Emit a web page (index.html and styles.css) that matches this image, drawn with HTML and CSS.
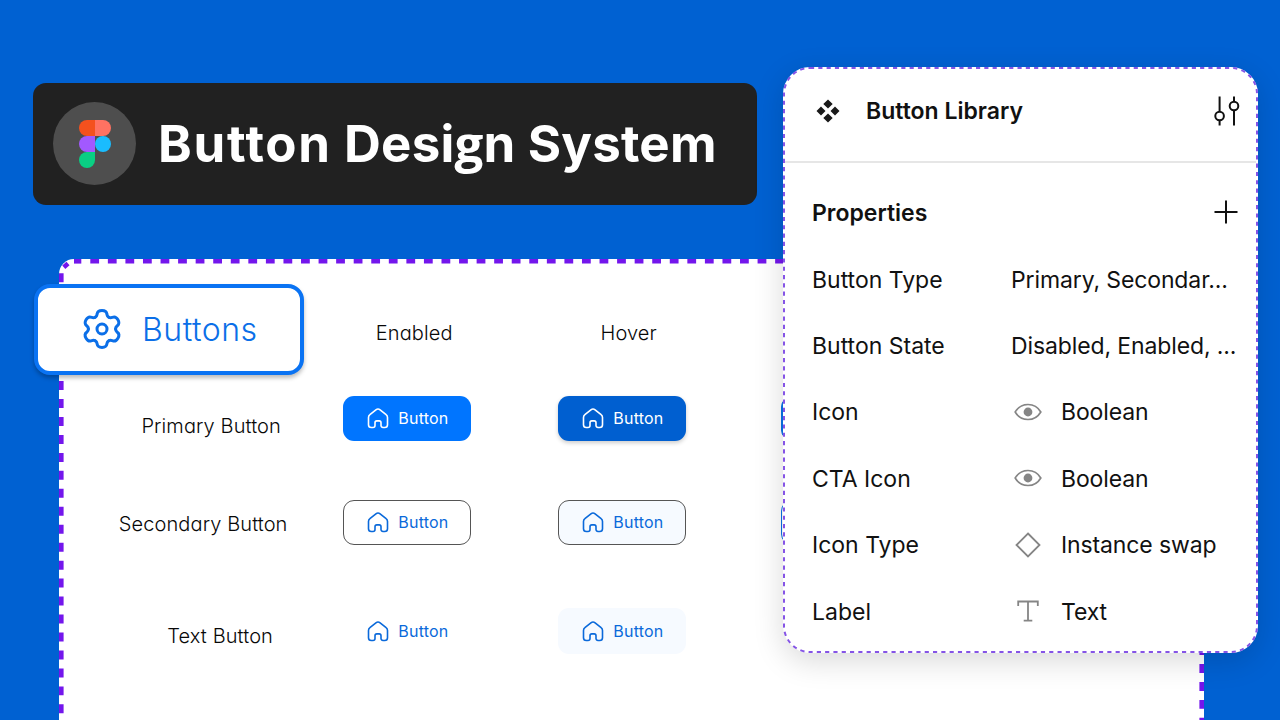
FILE: index.html
```html
<!DOCTYPE html>
<html lang="en">
<head>
<meta charset="utf-8">
<title>Button Design System</title>
<link rel="stylesheet" href="styles.css">
</head>
<body>
<svg class="defs" width="0" height="0" aria-hidden="true">
  <symbol id="home" viewBox="0 0 22 22"><path d="M4.3 20.5H6a2 2 0 0 0 2-2v-2.8a1.8 1.8 0 0 1 1.8-1.8h2.4a1.8 1.8 0 0 1 1.8 1.8v2.8a2 2 0 0 0 2 2h1.7a2.8 2.8 0 0 0 2.8-2.8v-7.3a3.5 3.5 0 0 0-1.4-2.8l-6-4.8a3.4 3.4 0 0 0-4.2 0l-6 4.8a3.5 3.5 0 0 0-1.4 2.8v7.3a2.8 2.8 0 0 0 2.8 2.8z" fill="none" stroke="currentColor" stroke-width="1.6"/></symbol>
  <symbol id="eye" viewBox="0 0 28 18"><path d="M1.2 9C4 4.2 8.5 1.5 14 1.5S24 4.2 26.8 9C24 13.8 19.5 16.5 14 16.5S4 13.8 1.2 9z" fill="none" stroke="currentColor" stroke-width="1.7"/><circle cx="14" cy="9" r="4.4" fill="currentColor"/></symbol>
</svg>
<header class="title">
  <span class="title-logo">
    <svg width="32" height="48" viewBox="0 0 32 48"><path d="M8 0h8v16H8A8 8 0 0 1 8 0z" fill="#f4511e"/><path d="M16 0h8a8 8 0 0 1 0 16h-8z" fill="#ff7262"/><path d="M8 16h8v16H8a8 8 0 0 1 0-16z" fill="#a259ff"/><circle cx="24" cy="24" r="8" fill="#1abcfe"/><path d="M8 32h8v8a8 8 0 1 1-8-8z" fill="#0acf83"/></svg>
  </span>
  <h1><span class="wide">Button</span> Desi<span class="looped">g</span>n System</h1>
</header>

<main class="sheet">
  <svg class="sheet-border" width="1145" height="470" viewBox="0 0 1145 470" fill="none" stroke="#7316ec" stroke-width="4.6">
    <path d="M15 2.300H22.300"/>
    <path d="M31.300 2.300H1129" stroke-dasharray="8.780"/>
    <path d="M4.800 8.200L9 4.500"/>
    <path d="M2.300 14.300V470" stroke-dasharray="8.980"/>
    <path d="M1142.700 11.300V470" stroke-dasharray="8.900 9"/>
  </svg>
  <div class="heads"><span class="head">Enabled</span><span class="head">Hover</span></div>
  <div class="row primary">
    <span class="label">Primary Button</span>
    <button class="btn solid"><svg><use href="#home"/></svg><span>Button</span></button>
    <button class="btn solid hover"><svg><use href="#home"/></svg><span>Button</span></button>
    <i class="btn peek"></i>
  </div>
  <div class="row secondary">
    <span class="label">Secondary Button</span>
    <button class="btn outline"><svg><use href="#home"/></svg><span>Button</span></button>
    <button class="btn outline tint"><svg><use href="#home"/></svg><span>Button</span></button>
    <i class="btn peek"></i>
  </div>
  <div class="row plain">
    <span class="label">Text Button</span>
    <button class="btn"><svg><use href="#home"/></svg><span>Button</span></button>
    <button class="btn tint"><svg><use href="#home"/></svg><span>Button</span></button>
  </div>
</main>

<div class="badge">
  <svg width="42" height="42" viewBox="-21 -21 42 42" fill="none" stroke="currentColor" stroke-width="3" stroke-linecap="round">
    <defs><path id="tooth" d="M-6.800-11.800C-5-12.800-5.100-13.600-4.900-14.900C-4.600-17.200-2.900-18.400 0-18.400S4.600-17.200 4.900-14.900C5.100-13.600 5-12.800 6.800-11.800"/></defs>
    <use href="#tooth"/><use href="#tooth" transform="rotate(60)"/><use href="#tooth" transform="rotate(120)"/><use href="#tooth" transform="rotate(180)"/><use href="#tooth" transform="rotate(240)"/><use href="#tooth" transform="rotate(300)"/>
    <circle r="5"/>
  </svg>
  <span>Buttons</span>
</div>

<aside class="panel">
  <svg class="panel-border" width="475" height="586" viewBox="0 0 475 586"><rect x="1" y="1" width="473" height="584" rx="26" fill="none" stroke="#8554e6" stroke-width="2" stroke-dasharray="4.150"/></svg>
  <div class="panel-head">
    <svg width="24" height="24" viewBox="-12 -12 24 24" fill="#1a1a1a"><path d="M0-11.500L4.700-7 0-2.500-4.700-7zM0 2.500L4.700 7 0 11.500-4.700 7zM-7-4.500L-2.500 0-7 4.500-11.500 0zM7-4.500L11.500 0 7 4.500 2.500 0z"/></svg>
    <h2>Button Library</h2>
    <svg width="26" height="30" viewBox="0 0 26 30" fill="none" stroke="#111" stroke-width="2"><path d="M5.600.500V16M5.600 24V29.500M20 .500V6M20 14V29.500"/><circle cx="5.600" cy="20" r="4.300"/><circle cx="20" cy="10" r="4.300"/></svg>
  </div>
  <div class="props">
    <div class="prop"><h3>Properties</h3><svg class="plus" width="24" height="24" viewBox="0 0 24 24" stroke="#111" stroke-width="2"><path d="M.500 12H23.500M12 .500V23.500"/></svg></div>
    <div class="prop"><span class="name">Button Type</span><span class="value">Primary, Secondar...</span></div>
    <div class="prop"><span class="name">Button State</span><span class="value">Disabled, Enabled, ...</span></div>
    <div class="prop"><span class="name">Icon</span><svg class="kind" width="28" height="18"><use href="#eye"/></svg><span class="value">Boolean</span></div>
    <div class="prop"><span class="name">CTA Icon</span><svg class="kind" width="28" height="18"><use href="#eye"/></svg><span class="value">Boolean</span></div>
    <div class="prop"><span class="name">Icon Type</span><svg class="kind" width="28" height="26" viewBox="0 0 28 26" fill="none" stroke="currentColor" stroke-width="1.800"><path d="M14 1.500L25.500 13 14 24.500 2.500 13z"/></svg><span class="value">Instance swap</span></div>
    <div class="prop"><span class="name">Label</span><svg class="kind" width="28" height="22" viewBox="0 0 28 22" fill="none" stroke="currentColor" stroke-width="1.800"><path d="M4.200 6V1.500H23.800V6M14 1.500V20.500M9.700 20.700H18.300"/></svg><span class="value">Text</span></div>
  </div>
</aside>
</body>
</html>
```
FILE: styles.css
```css
* { box-sizing: border-box; }
body {
  position: relative;
  width: 1280px;
  height: 720px;
  margin: 0;
  padding-top: 83px;
  overflow: hidden;
  background: #0061d2;
  font-family: Inter, "Liberation Sans", sans-serif;
  color: #111;
}
h1, h2, h3 { margin: 0; }
.defs { position: absolute; }

.title {
  display: flex;
  align-items: center;
  gap: 22px;
  width: 724px;
  height: 122px;
  margin-left: 33px;
  padding: 0 0 1px 20px;
  border-radius: 13px;
  background: #212121;
  color: #fff;
}
.title-logo {
  display: flex;
  align-items: center;
  justify-content: center;
  width: 83px;
  height: 83px;
  border-radius: 50%;
  background: #4e4e4e;
}
.title h1 {
  font-size: 51px;
  font-weight: 650;
  line-height: 60px;
  letter-spacing: 0.2px;
  white-space: nowrap;
}
.wide { letter-spacing: 1.7px; }
.looped { font-family: "Open Sans", sans-serif; font-weight: 700; line-height: 1; }

.sheet {
  position: relative;
  width: 1145px;
  height: 480px;
  margin: 54px 0 0 59px;
  border-radius: 15px;
  background: #fff;
}
.sheet-border { position: absolute; top: 0; left: 0; }
.heads {
  display: grid;
  grid-template-columns: 128px 128px;
  column-gap: 87px;
  padding: 60.500px 0 0 291.500px;
}
.head, .label {
  color: #080808;
  font-size: 20px;
  font-weight: 300;
  line-height: 26px;
  letter-spacing: 0.1px;
  text-align: center;
  font-feature-settings: "cv11";
}
.row { display: flex; gap: 87px; }
.label { flex: none; width: 284.300px; margin-right: -87px; }
.primary { margin-top: 50px; }
.secondary { margin-top: 58.500px; }
.plain { margin-top: 63px; }
.primary .label { padding: 17px 0 0 20px; }
.secondary .label { padding: 11px 0 0 4px; }
.plain .label { padding: 15px 0 0 38px; }
.btn {
  display: flex;
  flex: none;
  align-items: center;
  gap: 9px;
  width: 128px;
  height: 45.500px;
  padding: 0 0 0 24px;
  border: 0;
  border-radius: 11px;
  background: transparent;
  color: #0a69da;
  font: 380 16px Inter, sans-serif;
  letter-spacing: 0.2px;
}
.btn svg { width: 22px; height: 22px; }
.solid { background: #0075ff; color: #fff; }
.solid.hover { background: #005fd0; box-shadow: 0 2px 4px #0003; }
.outline { padding-left: 23px; border: 1px solid #555; background: #fff; }
.tint { background: #f6faff; }
.peek { margin-left: 7.700px; border: 1px solid #0872e8; }
.primary .peek { background: #0875e8; }

.heads { padding-left: 291px; }
.head { margin: 0 0 0 0; }
.heads { padding-left: 291.200px; column-gap: 86.500px; }

.badge {
  position: absolute;
  top: 284px;
  left: 33.500px;
  display: flex;
  align-items: center;
  gap: 19.500px;
  width: 270.500px;
  height: 90.500px;
  padding: 0 0 1px 43px;
  border: 4px solid #0a73f3;
  border-radius: 16px;
  background: #fff;
  box-shadow: 0 3px 4px #0004;
  color: #0b6fe8;
  font-size: 32px;
  font-weight: 330;
  letter-spacing: 0.5px;
}
.badge span { padding-top: 2px; }

.panel {
  position: absolute;
  top: 67px;
  left: 783px;
  width: 475px;
  height: 586px;
  border-radius: 27px;
  background: #fff;
  box-shadow: 0 8px 30px #00000026;
  font-size: 23px;
  line-height: 30px;
}
.panel-border { position: absolute; top: 0; left: 0; }
.panel-head {
  display: flex;
  align-items: center;
  height: 96px;
  margin: 0 2px;
  padding: 0 16px 6px 31px;
  border-bottom: 2px solid #e6e6e6;
}
.panel h2 { margin: 0 auto 0 26px; font-size: 23px; font-weight: 600; }
.panel h3 { font-size: 23px; font-weight: 600; }
.props { padding: 16.500px 0 0 29px; }
.prop { display: flex; align-items: center; height: 66.400px; white-space: nowrap; }
.plus { margin: -2px 20px 0 auto; }
.name { width: 199px; }
.value { letter-spacing: -0.12px; }
.name, .value { padding-top: 1px; }
.kind { width: 28px; margin: 0 19.500px 0 2.500px; color: #858585; }
```
